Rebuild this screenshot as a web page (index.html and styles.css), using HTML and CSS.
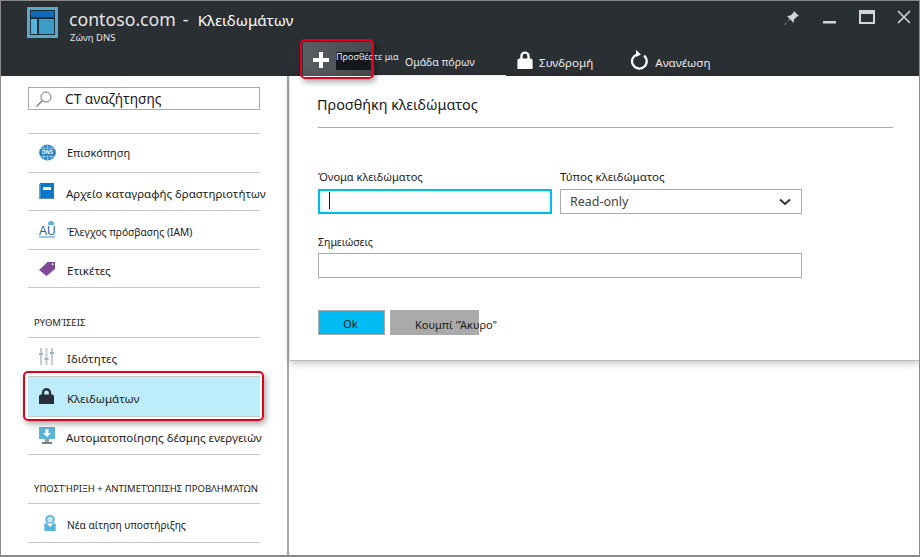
FILE: index.html
```html
<!DOCTYPE html>
<html lang="el">

<head>
    <meta charset="UTF-8">
    <meta name="viewport" content="width=device-width, initial-scale=1.0">
    <title>Κλειδωμάτων</title>
    <link rel="stylesheet" href="styles.css">
</head>

<body>
    <div id="frame">
        <div id="header">
            <div id="titleRow">
                <svg class="logo" width="31" height="31" viewBox="0 0 31 31">
                    <rect width="31" height="31" fill="#59a8c9" />
                    <rect x="3" y="3" width="25" height="25" fill="#20303c" />
                    <rect x="4" y="4" width="23" height="6" fill="#0f6cbd" />
                    <rect x="4" y="12" width="6" height="15" fill="#59b4d9" />
                    <rect x="12" y="12" width="15" height="15" fill="#3b9cc7" />
                </svg>
                <div id="titleText">
                    <div><span class="siteName">contoso.com</span><span class="dash">-</span><span class="bladeName">Κλειδωμάτων</span></div>
                    <div class="subTitle">Ζώνη DNS</div>
                </div>
                <div id="windowBtns">
                    <svg width="16" height="16" viewBox="0 0 16 16">
                        <path d="M10 1l5 5-2 .5-3 3-.5 3.5L5.500 8.500 1 15l-.5-.5L6 9 3 6l3.500-.5 3-3z" fill="#d5d5d5" />
                    </svg>
                    <svg width="14" height="16" viewBox="0 0 14 16">
                        <rect x="0" y="11" width="13" height="2.500" fill="#d5d5d5" />
                    </svg>
                    <svg width="16" height="14" viewBox="0 0 16 14">
                        <path d="M0 0h16v14H0zM2 4v8h12V4z" fill="#d5d5d5" />
                    </svg>
                    <svg width="14" height="14" viewBox="0 0 14 14">
                        <path d="M1 1l12 12M13 1L1 13" stroke="#d5d5d5" stroke-width="1.600" />
                    </svg>
                </div>
            </div>
            <div id="toolbar">
                <div class="addBtn">
                    <svg width="18" height="18" viewBox="0 0 18 18">
                        <path d="M7 1h4v6h6v4h-6v6H7v-6H1V7h6z" fill="#fff" />
                    </svg>
                    <span class="addLabel">Προσθέστε μια</span>
                </div>
                <div class="tab tabActive">Ομάδα πόρων</div>
                <div class="tab tabLock">
                    <svg width="16" height="18" viewBox="0 0 16 19">
                        <path d="M3 8V5.500a5 5 0 0 1 10 0V8h1a2 2 0 0 1 2 2v9H0v-9a2 2 0 0 1 2-2zM5.500 8h5V5.500a2.500 2.500 0 0 0-5 0z" fill="#fff" />
                    </svg>
                    Συνδρομή
                </div>
                <div class="tab tabRefresh">
                    <svg width="18" height="20" viewBox="0 0 18 20">
                        <path d="M6.500 4.200A7.300 7.300 0 1 0 13 5.600" fill="none" stroke="#fff" stroke-width="2.200" />
                        <path d="M5 0l5 4.500L5 7z" fill="#fff" />
                    </svg>
                    Ανανέωση
                </div>
            </div>
        </div>

        <div id="body">
            <div id="sidebar">
                <div class="search">
                    <svg width="18" height="18" viewBox="0 0 18 18">
                        <circle cx="11" cy="7" r="5" fill="none" stroke="#777" />
                        <path d="M7.500 10.500L1.500 16.500" stroke="#777" stroke-width="1.200" />
                    </svg>
                    <span>CT αναζήτησης</span>
                </div>
                <div class="menu">
                    <div class="item itemHigh">
                        <svg width="17" height="17" viewBox="0 0 18 18">
                            <circle cx="9" cy="9" r="8.500" fill="#3b8fc9" />
                            <path d="M1 5h16M1 13h16M9 1v16M5 2v14M13 2v14" stroke="#9fd0ea" stroke-width=".7" />
                            <rect x="0.500" y="6" width="17" height="6" fill="#2a7db8" />
                            <text x="9" y="11" font-size="5.500" font-weight="700" fill="#fff" text-anchor="middle" font-family="Liberation Sans">DNS</text>
                        </svg>
                        <span>Επισκόπηση</span>
                    </div>
                    <div class="item itemWide">
                        <svg width="15" height="16" viewBox="0 0 15 16">
                            <rect x="1" width="14" height="15" fill="#0a78c8" />
                            <rect x="0" y="1" width="1.500" height="15" fill="#5fa8d8" />
                            <rect x="4" y="4" width="8" height="3" fill="#fff" />
                            <rect x="1" y="15" width="14" height="1" fill="#5a8fb5" />
                        </svg>
                        <span>Αρχείο καταγραφής δραστηριοτήτων</span>
                    </div>
                    <div class="item itemSmall">
                        <svg width="16" height="17" viewBox="0 0 16 17">
                            <text x="0" y="14" font-size="12" fill="#2a5f8f" font-family="Liberation Sans">AU</text>
                            <path d="M9 3a3 3 0 0 1 6 0v1H9z" fill="#59b4d9" />
                            <rect y="15.500" width="16" height="1" fill="#3b8fc9" />
                        </svg>
                        <span>Έλεγχος πρόσβασης (IAM)</span>
                    </div>
                    <div class="item">
                        <svg width="17" height="15" viewBox="0 0 18 16">
                            <path d="M0 9.500L9 1h8v7.500L8 16z" fill="#804998" />
                            <circle cx="14.500" cy="3.500" r="1" fill="#fff" />
                        </svg>
                        <span>Ετικέτες</span>
                    </div>
                </div>

                <div class="sectionLabel">ΡΥΘΜΊΣΕΙΣ</div>
                <div class="menu">
                    <div class="item">
                        <svg width="15" height="17" viewBox="0 0 15 17">
                            <path d="M1 0h2v17H1zM6.500 0h2v17h-2zM12 0h2v17h-2z" fill="#c4ccd1" />
                            <path d="M0 5h4v2H0zM5.500 10h4v2h-4zM11 4h4v2h-4z" fill="#8fb8d0" />
                        </svg>
                        <span>Ιδιότητες</span>
                    </div>
                    <div class="item itemActive">
                        <svg width="15" height="16" viewBox="0 0 16 17">
                            <path d="M3 7V5a5 5 0 0 1 10 0v2h1a2 2 0 0 1 2 2v8H0V9a2 2 0 0 1 2-2zM5.500 7h5V5a2.500 2.500 0 0 0-5 0z" fill="#2b3038" />
                        </svg>
                        <span>Κλειδωμάτων</span>
                    </div>
                    <div class="item itemWide">
                        <svg width="16" height="17" viewBox="0 0 16 17">
                            <rect width="16" height="12" fill="#59b4d9" />
                            <path d="M6.500 2h3v4h2.500L8 10 4 6h2.500z" fill="#fff" />
                            <rect x="6" y="12" width="4" height="3" fill="#9a9a9a" />
                            <rect x="3" y="15" width="10" height="2" fill="#7a7a7a" />
                        </svg>
                        <span>Αυτοματοποίησης δέσμης ενεργειών</span>
                    </div>
                </div>

                <div class="sectionLabel sectionLabelLast">ΥΠΟΣΤΉΡΙΞΗ + ΑΝΤΙΜΕΤΏΠΙΣΗΣ ΠΡΟΒΛΗΜΆΤΩΝ</div>
                <div class="menu">
                    <div class="item itemSupport">
                        <svg width="16" height="17" viewBox="0 0 16 18">
                            <circle cx="8" cy="6" r="5" fill="#59b4d9" />
                            <circle cx="8" cy="6" r="3" fill="#c9e8f5" />
                            <path d="M2 10h12v8H2z" fill="#59b4d9" />
                            <path d="M5 10l3 4 3-4" fill="#fff" />
                        </svg>
                        <span>Νέα αίτηση υποστήριξης</span>
                    </div>
                </div>
            </div>

            <div id="main">
                <div id="blade">
                    <h1>Προσθήκη κλειδώματος</h1>
                    <div class="formRow">
                        <div class="field">
                            <label>Όνομα κλειδώματος</label>
                            <div class="input inputFocus"><span class="caret"></span></div>
                        </div>
                        <div class="field">
                            <label class="labelWide">Τύπος κλειδώματος</label>
                            <div class="input select">
                                Read-only
                                <svg width="12" height="8" viewBox="0 0 12 8">
                                    <path d="M1 1.500l5 4.500 5-4.500" fill="none" stroke="#333" stroke-width="2" />
                                </svg>
                            </div>
                        </div>
                    </div>
                    <div class="field notes">
                        <label>Σημειώσεις</label>
                        <div class="input"></div>
                    </div>
                    <div class="buttons">
                        <div class="btn btnOk">Ok</div>
                        <div class="btn btnCancel"><span>Κουμπί "Άκυρο"</span></div>
                    </div>
                </div>
            </div>
        </div>

        <div class="callout calloutAdd"></div>
        <div class="callout calloutLock"></div>
    </div>
</body>

</html>
```

FILE: styles.css
```css
* {
    box-sizing: border-box;
}

html,
body {
    margin: 0;
    padding: 0;
}

body {
    width: 920px;
    height: 557px;
    overflow: hidden;
    font-family: "Noto Sans", "Open Sans", sans-serif;
    color: #1a1a1a;
    background: #fff;
}

#frame {
    position: relative;
    width: 920px;
    height: 557px;
    border: 1px solid #8a8a8a;
    border-bottom-width: 2px;
    overflow: hidden;
    display: flex;
    flex-direction: column;
}

#header {
    height: 75px;
    background: #2a2f33;
    color: #fff;
    flex: none;
}

#titleRow {
    display: flex;
    align-items: flex-start;
    height: 41px;
    padding: 6px 0 0 26px;
}

.logo {
    flex: none;
}

#titleText {
    margin-left: 11px;
}

.siteName {
    font-size: 17.700px;
    line-height: 24px;
    color: #e6e6e6;
}

.dash {
    font-size: 18px;
    margin: 0 9px 0 7px;
    color: #e6e6e6;
}

.bladeName {
    font-size: 15.200px;
}

.subTitle {
    font-size: 9.500px;
    line-height: 12px;
    margin-top: 1px;
    margin-left: 1px;
    color: #e6e6e6;
}

#windowBtns {
    margin-left: auto;
    display: flex;
    align-items: flex-start;
    gap: 22px;
    padding: 3px 8px 0 0;
}

#windowBtns svg:first-child {
    margin-right: 1px;
}

#toolbar {
    display: flex;
    align-items: stretch;
    height: 34px;
    padding-left: 302px;
}

.addBtn {
    position: relative;
    width: 69px;
    height: 34px;
    background: linear-gradient(90deg, #5a5e62, #45494d);
    padding: 9px 0 0 9px;
}

.addBtn svg {
    display: block;
}

.addLabel {
    position: absolute;
    left: 33px;
    top: 10px;
    height: 18px;
    width: 35px;
    background: #16191c;
    font-size: 9px;
    line-height: 10px;
    white-space: nowrap;
    color: #e8e8e8;
}

.tab {
    display: flex;
    align-items: center;
    font-size: 11.600px;
    padding-top: 7px;
    color: #eaeaea;
}

.tab svg {
    margin-right: 6px;
    margin-top: -5px;
}

.tabActive {
    width: 134px;
    padding-left: 33px;
    font-size: 10.500px;
    border-bottom: 1px solid #fff;
}

.tabLock {
    margin-left: 11px;
}

.tabRefresh {
    margin-left: 38px;
}

#body {
    flex: 1;
    display: flex;
    min-height: 0;
}

#sidebar {
    width: 288px;
    flex: none;
    padding: 11px 27px 0 27px;
    border-right: 2px solid #a8a8a8;
}

.search {
    height: 23px;
    display: flex;
    align-items: center;
    border: 1px solid #aaa;
    padding-left: 6px;
    font-size: 13.700px;
}

.search span {
    margin-left: 12px;
}

.menu {
    border-top: 1px solid #c8c8c8;
}

.search + .menu {
    margin-top: 23px;
}

.item {
    height: 38.500px;
    display: grid;
    grid-template-columns: 28px 1fr;
    align-items: center;
    border-bottom: 1px solid #c8c8c8;
    font-size: 11.500px;
    padding-left: 11px;
    white-space: nowrap;
}

.item span {
    position: relative;
    top: 2px;
}

.itemHigh {
    font-size: 11px;
}

.itemHigh span {
    top: 0;
}

.itemWide span {
    margin-left: -1px;
}

.itemSmall,
.itemSupport {
    font-size: 10.200px;
}

.itemSupport svg {
    margin-left: 3px;
}

.itemActive {
    height: 40px;
    background: #bdecfb;
}

.sectionLabel {
    height: 49px;
    padding: 29px 0 0 6px;
    font-size: 9.500px;
    line-height: 12px;
    white-space: nowrap;
}

.sectionLabelLast {
    height: 48px;
    padding-top: 28px;
}

#main {
    flex: 1;
    background: #fff;
    position: relative;
}

#blade {
    height: 285px;
    margin-left: 1px;
    padding: 19px 26px 0 28px;
    background: #fff;
    border-bottom: 1px solid #bbb;
    box-shadow: 0 2px 8px rgba(0, 0, 0, .25);
}

#blade h1 {
    margin: 0 0 42px;
    padding-bottom: 12px;
    height: 33px;
    font-size: 14.400px;
    line-height: 20px;
    font-weight: 400;
    text-indent: -1px;
    border-bottom: 1px solid #aaa;
}

.formRow {
    display: grid;
    grid-template-columns: 234px 242px;
    gap: 8px;
}

.field label {
    display: block;
    font-size: 11px;
    line-height: 14px;
    margin-bottom: 5px;
}

.field .labelWide {
    font-size: 11.500px;
}

.input {
    height: 25px;
    border: 1px solid #aaa;
    background: #fff;
    font-size: 12.500px;
    color: #444;
}

.inputFocus {
    border: 2px solid #00bcf2;
    box-shadow: inset 0 0 3px #9fe0f7;
    padding: 1px 0 0 9px;
}

.caret {
    display: block;
    width: 1px;
    height: 17px;
    background: #111;
}

.select {
    display: flex;
    align-items: center;
    justify-content: space-between;
    padding: 0 10px 0 9px;
}

.notes {
    width: 484px;
    margin-top: 21px;
}

.notes label {
    font-size: 10.500px;
    margin-bottom: 4px;
}

.buttons {
    display: flex;
    gap: 5px;
    margin-top: 32px;
}

.btn {
    height: 25px;
    font-size: 11px;
}

.btnOk {
    width: 67px;
    background: #00bcf2;
    border: 1px solid #aaa;
    text-align: center;
    line-height: 25px;
    padding-right: 2px;
}

.btnCancel {
    width: 89px;
    background: #aaa;
    padding: 7px 0 0 25px;
    white-space: nowrap;
}

.callout {
    position: absolute;
    border: 2px solid #e3001b;
    border-radius: 5px;
    box-shadow: 2px 3px 6px rgba(0, 0, 0, .35);
}

.calloutAdd {
    left: 299px;
    top: 38px;
    width: 74px;
    height: 40px;
}

.calloutLock {
    left: 22px;
    top: 370px;
    width: 241px;
    height: 50px;
}
```
